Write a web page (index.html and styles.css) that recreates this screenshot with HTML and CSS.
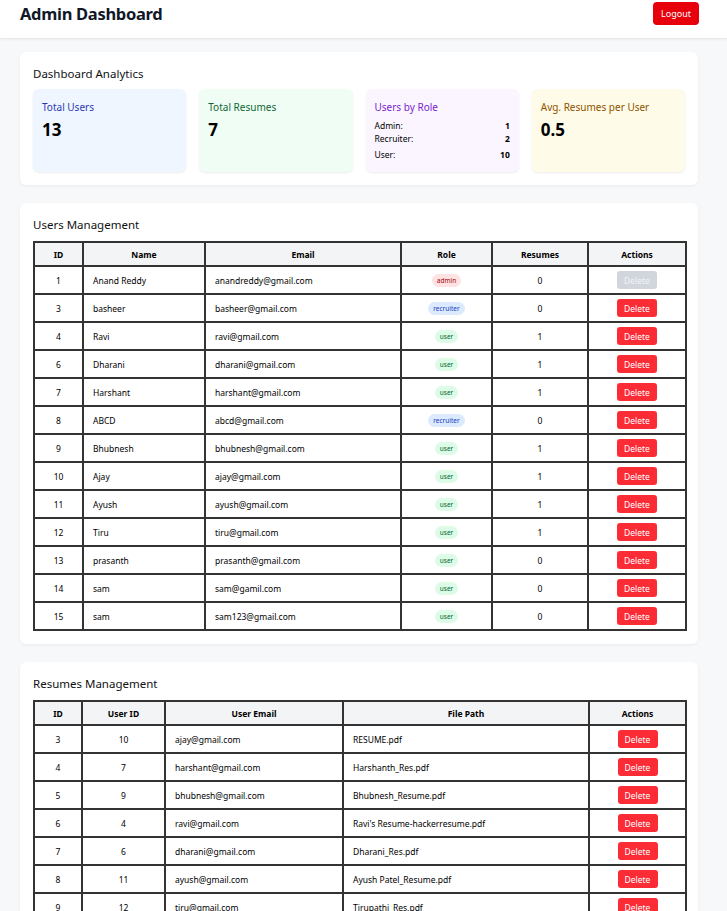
FILE: index.html
```html
<!DOCTYPE html>
<html lang="en">
<head>
<meta charset="utf-8">
<title>Admin Dashboard</title>
<link rel="stylesheet" href="styles.css">
</head>
<body>
<header class="topbar">
  <h1 class="brand">Admin Dashboard</h1>
  <button class="btn-logout">Logout</button>
</header>
<main class="content">
  <section class="card">
    <h2 class="card-title">Dashboard Analytics</h2>
    <div class="stats">
      <div class="stat stat-blue">
        <div class="stat-label">Total Users</div>
        <div class="stat-value">13</div>
      </div>
      <div class="stat stat-green">
        <div class="stat-label">Total Resumes</div>
        <div class="stat-value">7</div>
      </div>
      <div class="stat stat-purple">
        <div class="stat-label">Users by Role</div>
        <ul class="role-list">
          <li><span>Admin:</span><b>1</b></li>
          <li><span>Recruiter:</span><b>2</b></li>
          <li class="last"><span>User:</span><b>10</b></li>
        </ul>
      </div>
      <div class="stat stat-yellow">
        <div class="stat-label">Avg. Resumes per User</div>
        <div class="stat-value">0.5</div>
      </div>
    </div>
  </section>

  <section class="card">
    <h2 class="card-title">Users Management</h2>
    <table class="grid users">
      <colgroup>
        <col class="c-id"><col class="c-name"><col class="c-email"><col class="c-role"><col class="c-res"><col class="c-act">
      </colgroup>
      <thead>
        <tr><th>ID</th><th>Name</th><th>Email</th><th>Role</th><th>Resumes</th><th>Actions</th></tr>
      </thead>
      <tbody>
        <tr><td class="ctr">1</td><td>Anand Reddy</td><td>anandreddy@gmail.com</td><td class="ctr"><span class="badge b-admin">admin</span></td><td class="ctr">0</td><td class="ctr"><button class="btn-del disabled">Delete</button></td></tr>
        <tr><td class="ctr">3</td><td>basheer</td><td>basheer@gmail.com</td><td class="ctr"><span class="badge b-rec">recruiter</span></td><td class="ctr">0</td><td class="ctr"><button class="btn-del">Delete</button></td></tr>
        <tr><td class="ctr">4</td><td>Ravi</td><td>ravi@gmail.com</td><td class="ctr"><span class="badge b-user">user</span></td><td class="ctr">1</td><td class="ctr"><button class="btn-del">Delete</button></td></tr>
        <tr><td class="ctr">6</td><td>Dharani</td><td>dharani@gmail.com</td><td class="ctr"><span class="badge b-user">user</span></td><td class="ctr">1</td><td class="ctr"><button class="btn-del">Delete</button></td></tr>
        <tr><td class="ctr">7</td><td>Harshant</td><td>harshant@gmail.com</td><td class="ctr"><span class="badge b-user">user</span></td><td class="ctr">1</td><td class="ctr"><button class="btn-del">Delete</button></td></tr>
        <tr><td class="ctr">8</td><td>ABCD</td><td>abcd@gmail.com</td><td class="ctr"><span class="badge b-rec">recruiter</span></td><td class="ctr">0</td><td class="ctr"><button class="btn-del">Delete</button></td></tr>
        <tr><td class="ctr">9</td><td>Bhubnesh</td><td>bhubnesh@gmail.com</td><td class="ctr"><span class="badge b-user">user</span></td><td class="ctr">1</td><td class="ctr"><button class="btn-del">Delete</button></td></tr>
        <tr><td class="ctr">10</td><td>Ajay</td><td>ajay@gmail.com</td><td class="ctr"><span class="badge b-user">user</span></td><td class="ctr">1</td><td class="ctr"><button class="btn-del">Delete</button></td></tr>
        <tr><td class="ctr">11</td><td>Ayush</td><td>ayush@gmail.com</td><td class="ctr"><span class="badge b-user">user</span></td><td class="ctr">1</td><td class="ctr"><button class="btn-del">Delete</button></td></tr>
        <tr><td class="ctr">12</td><td>Tiru</td><td>tiru@gmail.com</td><td class="ctr"><span class="badge b-user">user</span></td><td class="ctr">1</td><td class="ctr"><button class="btn-del">Delete</button></td></tr>
        <tr><td class="ctr">13</td><td>prasanth</td><td>prasanth@gmail.com</td><td class="ctr"><span class="badge b-user">user</span></td><td class="ctr">0</td><td class="ctr"><button class="btn-del">Delete</button></td></tr>
        <tr><td class="ctr">14</td><td>sam</td><td>sam@gamil.com</td><td class="ctr"><span class="badge b-user">user</span></td><td class="ctr">0</td><td class="ctr"><button class="btn-del">Delete</button></td></tr>
        <tr><td class="ctr">15</td><td>sam</td><td>sam123@gmail.com</td><td class="ctr"><span class="badge b-user">user</span></td><td class="ctr">0</td><td class="ctr"><button class="btn-del">Delete</button></td></tr>
      </tbody>
    </table>
  </section>

  <section class="card">
    <h2 class="card-title">Resumes Management</h2>
    <table class="grid resumes">
      <colgroup>
        <col class="r-id"><col class="r-uid"><col class="r-email"><col class="r-path"><col class="r-act">
      </colgroup>
      <thead>
        <tr><th>ID</th><th>User ID</th><th>User Email</th><th>File Path</th><th>Actions</th></tr>
      </thead>
      <tbody>
        <tr><td class="ctr">3</td><td class="ctr">10</td><td>ajay@gmail.com</td><td>RESUME.pdf</td><td class="ctr"><button class="btn-del">Delete</button></td></tr>
        <tr><td class="ctr">4</td><td class="ctr">7</td><td>harshant@gmail.com</td><td>Harshanth_Res.pdf</td><td class="ctr"><button class="btn-del">Delete</button></td></tr>
        <tr><td class="ctr">5</td><td class="ctr">9</td><td>bhubnesh@gmail.com</td><td>Bhubnesh_Resume.pdf</td><td class="ctr"><button class="btn-del">Delete</button></td></tr>
        <tr><td class="ctr">6</td><td class="ctr">4</td><td>ravi@gmail.com</td><td>Ravi's Resume-hackerresume.pdf</td><td class="ctr"><button class="btn-del">Delete</button></td></tr>
        <tr><td class="ctr">7</td><td class="ctr">6</td><td>dharani@gmail.com</td><td>Dharani_Res.pdf</td><td class="ctr"><button class="btn-del">Delete</button></td></tr>
        <tr><td class="ctr">8</td><td class="ctr">11</td><td>ayush@gmail.com</td><td>Ayush Patel_Resume.pdf</td><td class="ctr"><button class="btn-del">Delete</button></td></tr>
        <tr><td class="ctr">9</td><td class="ctr">12</td><td>tiru@gmail.com</td><td>Tirupathi_Res.pdf</td><td class="ctr"><button class="btn-del">Delete</button></td></tr>
      </tbody>
    </table>
  </section>
</main>
</body>
</html>
```

FILE: styles.css
```css
* { box-sizing: border-box; }

html, body {
  margin: 0;
  padding: 0;
}

body {
  background: #f7f8fa;
  font-family: "Noto Sans", "Open Sans", sans-serif;
  color: #111;
}

.topbar {
  display: flex;
  align-items: center;
  justify-content: space-between;
  height: 39px;
  padding: 0 28px 11px 20px;
  background: #fff;
  border-bottom: 1px solid #e6e8ec;
  box-shadow: 0 1px 2px rgba(0,0,0,0.04);
}

.brand {
  margin: 0;
  font-size: 16.5px;
  font-weight: 700;
  color: #101828;
  letter-spacing: -0.3px;
}

.btn-logout {
  width: 46px;
  height: 23px;
  border: 0;
  border-radius: 4px;
  background: #e7000b;
  color: #fff;
  font-family: inherit;
  font-size: 9px;
  padding: 0;
}

.content {
  display: flex;
  flex-direction: column;
  gap: 18px;
  padding: 13px 29px 20px 20px;
}

.card {
  background: #fff;
  border-radius: 6px;
  box-shadow: 0 1px 3px rgba(0,0,0,0.06);
  padding: 14px 13px 13px;
}

.card-title {
  margin: 0 0 8px;
  font-size: 11.5px;
  line-height: 16px;
  font-weight: 400;
  color: #111;
}

.stats {
  display: grid;
  grid-template-columns: repeat(4, 1fr);
  gap: 13px;
  margin-top: -1px;
}

.stat {
  height: 83px;
  border-radius: 6px;
  padding: 11px 9px 9px;
  box-shadow: 0 1px 2px rgba(0,0,0,0.08);
}

.stat-label {
  font-size: 10px;
  line-height: 14px;
}

.stat-value {
  margin-top: 5px;
  font-size: 17px;
  line-height: 22px;
  font-weight: 700;
  color: #000;
}

.stat-blue { background: #eff6ff; }
.stat-blue .stat-label { color: #2d3ab4; }
.stat-green { background: #f0fdf4; }
.stat-green .stat-label { color: #0f6a37; }
.stat-purple { background: #faf5ff; }
.stat-purple .stat-label { color: #7a1fd0; }
.stat-yellow { background: #fefce8; }
.stat-yellow .stat-label { color: #8f5200; }

.role-list {
  list-style: none;
  margin: 5px 0 0;
  padding: 0;
  font-size: 8.5px;
  line-height: 13px;
  color: #000;
}

.role-list li {
  display: flex;
  justify-content: space-between;
}

.role-list li.last { margin-top: 3px; }

.grid {
  width: 100%;
  border-collapse: collapse;
  table-layout: fixed;
  font-size: 8.5px;
  color: #000;
}

.grid th,
.grid td {
  border: 2px solid #333;
  padding: 0 9px;
  text-align: left;
}

.grid th {
  height: 24px;
  background: #f3f4f6;
  font-weight: 700;
  text-align: center;
}

.grid td { height: 28px; }

.grid .ctr { text-align: center; }

.c-id { width: 49px; }
.c-name { width: 122px; }
.c-email { width: 196px; }
.c-role { width: 91px; }
.c-res { width: 96px; }
.c-act { width: 98px; }

.r-id { width: 48px; }
.r-uid { width: 83px; }
.r-email { width: 178px; }
.r-path { width: 246px; }
.r-act { width: 97px; }

.badge {
  display: inline-block;
  padding: 0 5px;
  height: 13px;
  line-height: 13px;
  border-radius: 7px;
  font-size: 6.5px;
  vertical-align: middle;
}

.b-admin { background: #ffe2e2; color: #9f0712; }
.b-rec { background: #dbeafe; color: #193cb8; }
.b-user { background: #dcfce7; color: #016630; }

.btn-del {
  width: 40px;
  height: 18px;
  border: 0;
  border-radius: 3px;
  background: #fb2c36;
  color: #fff;
  font-family: inherit;
  font-size: 8.5px;
  padding: 0;
  vertical-align: middle;
}

.btn-del.disabled {
  background: #d1d5dc;
  color: #f3f4f6;
}
```
